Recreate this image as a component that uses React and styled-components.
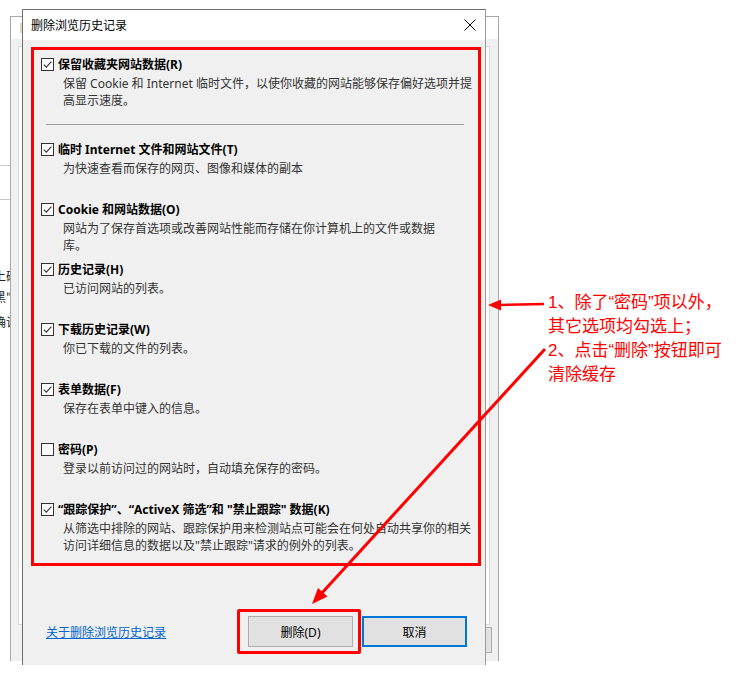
import * as React from 'react';
import styled, { createGlobalStyle } from 'styled-components';

const GlobalStyle = createGlobalStyle`
  html, body {
    margin: 0;
    padding: 0;
    background: #ffffff;
  }
  body {
    font-family: "Noto Sans", "Noto Sans CJK SC", sans-serif;
  }
`;

const Page = styled.div`
  position: relative;
  width: 747px;
  height: 675px;
  overflow: hidden;
  background: #ffffff;
`;

const PageEdge = styled.div`
  width: 10px;
  height: 675px;
  overflow: hidden;
  display: flex;
  flex-direction: column;
  font-size: 12px;
  color: #222;
  font-family: "Noto Sans CJK SC", sans-serif;
`;

const EdgeRule = styled.div`
  width: 10px;
  border-top: 1px solid #c8c8c8;
  margin-top: ${(p) => p.$gap}px;
`;

const EdgeText = styled.div`
  margin-left: -6px;
  white-space: nowrap;
  line-height: 16px;
  margin-top: ${(p) => p.$gap}px;
`;

const BackWindow = styled.div`
  position: absolute;
  left: 10px;
  top: 16px;
  width: 487px;
  height: 644px;
  border: 1px solid #a8a8a8;
  border-bottom: 0;
  background: #f0f0f0;
  display: flex;
  flex-direction: column;
`;

const BackTitle = styled.div`
  height: 22px;
  background: #ffffff;
  display: flex;
  align-items: center;
  padding-left: 9px;

  & > span {
    width: 3px;
    height: 10px;
    background: #e2d7c4;
  }
`;

const BackPanel = styled.div`
  margin: 7px 8px 0 7px;
  height: 577px;
  background: #ffffff;
  border: 1px solid #dadada;
`;

const BackButtons = styled.div`
  display: flex;
  justify-content: flex-end;
  padding: 2px 6px 0 0;

  & > div {
    width: 70px;
    height: 24px;
    border: 1px solid #adadad;
    background: #e1e1e1;
  }
`;

const Dialog = styled.div`
  position: absolute;
  left: 22px;
  top: 9px;
  width: 462px;
  height: 655px;
  border: 1px solid #6f6f6f;
  border-right-color: #9a9a9a;
  border-bottom: 0;
  background: #f0f0f0;
  display: flex;
  flex-direction: column;
`;

const TitleBar = styled.div`
  height: 30px;
  background: #ffffff;
  display: flex;
  align-items: center;
  justify-content: space-between;
  padding: 0 9px 0 8px;
  font-size: 12px;
  color: #000;
`;

const Body = styled.div`
  padding: 7px 0 0 8px;
  display: flex;
  flex-direction: column;
`;

const ListBox = styled.div`
  width: 437px;
  height: 507px;
  border: 3px solid #ff0000;
  padding: 6px 0 0 7px;
`;

const Item = styled.div`
  height: 60px;
  display: flex;
  flex-direction: column;
`;

const LabelRow = styled.div`
  display: flex;
  align-items: center;
  gap: 4px;
  height: 16px;
  font-size: 12px;
  font-weight: 700;
  color: #000;
  white-space: nowrap;
`;

const Box = styled.span`
  width: 11px;
  height: 11px;
  border: 1px solid #333333;
  background: #ffffff;
  display: flex;
  align-items: center;
  justify-content: center;
`;

const Desc = styled.div`
  margin: 3px 0 0 22px;
  font-size: 12px;
  line-height: 17px;
  color: #333333;
  white-space: nowrap;
`;

const Separator = styled.div`
  width: 418px;
  height: 1px;
  background: #a0a0a0;
  margin: 8px 0 16px 5px;
`;

const Footer = styled.div`
  display: flex;
  align-items: center;
  padding: 0 18px 0 15px;
  margin-top: 43px;
`;

const HelpLink = styled.a`
  font-size: 12px;
  color: #0066cc;
  text-decoration: underline;
  cursor: pointer;
`;

const Highlight = styled.div`
  margin-left: auto;
  border: 3px solid #ff0000;
  border-radius: 2px;
  padding: 4px 5px 4px 8px;
  display: flex;
`;

const Button = styled.button`
  width: 105px;
  height: 31px;
  margin: 0 0 0 ${(p) => (p.$gap ? 1 : 0)}px;
  border: ${(p) => (p.$primary ? '2px solid #0078d7' : '1px solid #adadad')};
  background: #e1e1e1;
  font-family: "Noto Sans", "Noto Sans CJK SC", sans-serif;
  font-size: 12px;
  color: #000;
  padding: 0;
`;

const Note = styled.div`
  position: absolute;
  left: 548px;
  top: 291px;
  font-family: "Liberation Sans", "Noto Sans CJK SC", sans-serif;
  font-size: 17px;
  line-height: 24px;
  color: #ff0000;
  white-space: nowrap;
`;

const Arrows = styled.svg`
  position: absolute;
  left: 0;
  top: 0;
  pointer-events: none;
`;

const Check = ({ checked }) => (
  <Box>
    {checked && (
      <svg width="11" height="11" viewBox="0 0 11 11">
        <polyline points="1.8,5.6 4.3,8.1 9.4,2.6" fill="none" stroke="#333" strokeWidth="1.1" />
      </svg>
    )}
  </Box>
);

const items = [
  {
    label: '临时 Internet 文件和网站文件(T)',
    desc: ['为快速查看而保存的网页、图像和媒体的副本'],
    checked: true,
  },
  {
    label: 'Cookie 和网站数据(O)',
    desc: ['网站为了保存首选项或改善网站性能而存储在你计算机上的文件或数据', '库。'],
    checked: true,
  },
  { label: '历史记录(H)', desc: ['已访问网站的列表。'], checked: true },
  { label: '下载历史记录(W)', desc: ['你已下载的文件的列表。'], checked: true },
  { label: '表单数据(F)', desc: ['保存在表单中键入的信息。'], checked: true },
  { label: '密码(P)', desc: ['登录以前访问过的网站时，自动填充保存的密码。'], checked: false },
  {
    label: '“跟踪保护”、“ActiveX 筛选”和 "禁止跟踪" 数据(K)',
    desc: [
      '从筛选中排除的网站、跟踪保护用来检测站点可能会在何处自动共享你的相关',
      '访问详细信息的数据以及"禁止跟踪"请求的例外的列表。',
    ],
    checked: true,
  },
];

const Option = ({ label, desc, checked }) => (
  <Item>
    <LabelRow>
      <Check checked={checked} />
      {label}
    </LabelRow>
    <Desc>
      {desc.map((line, i) => (
        <div key={i}>{line}</div>
      ))}
    </Desc>
  </Item>
);

const App = () => (
  <Page>
    <GlobalStyle />
    <PageEdge>
      <EdgeRule $gap={165} />
      <EdgeRule $gap={33} />
      <EdgeText $gap={68}>上确认</EdgeText>
      <EdgeText $gap={5}>黑"</EdgeText>
      <EdgeText $gap={9}>确诊</EdgeText>
    </PageEdge>

    <BackWindow>
      <BackTitle>
        <span />
      </BackTitle>
      <BackPanel />
      <BackButtons>
        <div />
      </BackButtons>
    </BackWindow>

    <Dialog>
      <TitleBar>
        <span>删除浏览历史记录</span>
        <svg width="12" height="12" viewBox="0 0 12 12">
          <path d="M0.5 0.5 L11.5 11.5 M11.5 0.5 L0.5 11.5" stroke="#000" strokeWidth="1" />
        </svg>
      </TitleBar>
      <Body>
        <ListBox>
          <Option
            label="保留收藏夹网站数据(R)"
            desc={['保留 Cookie 和 Internet 临时文件，以使你收藏的网站能够保存偏好选项并提', '高显示速度。']}
            checked
          />
          <Separator />
          {items.map((it) => (
            <Option key={it.label} {...it} />
          ))}
        </ListBox>
        <Footer>
          <HelpLink>关于删除浏览历史记录</HelpLink>
          <Highlight>
            <Button>删除(D)</Button>
          </Highlight>
          <Button $primary $gap>
            取消
          </Button>
        </Footer>
      </Body>
    </Dialog>

    <Note>
      <div>1、除了“密码”项以外，</div>
      <div>其它选项均勾选上；</div>
      <div>2、点击“删除”按钮即可</div>
      <div>清除缓存</div>
    </Note>

    <Arrows width="747" height="675" viewBox="0 0 747 675">
      <line x1="544" y1="304" x2="499" y2="305" stroke="#ff0000" strokeWidth="2.5" />
      <polygon points="488,305 501,299.5 501,310.5" fill="#ff0000" />
      <line x1="545" y1="349" x2="321" y2="594" stroke="#ff0000" strokeWidth="3" />
      <polygon points="312,604 327.5,596.5 318,588" fill="#ff0000" />
    </Arrows>
  </Page>
);

export default App;
